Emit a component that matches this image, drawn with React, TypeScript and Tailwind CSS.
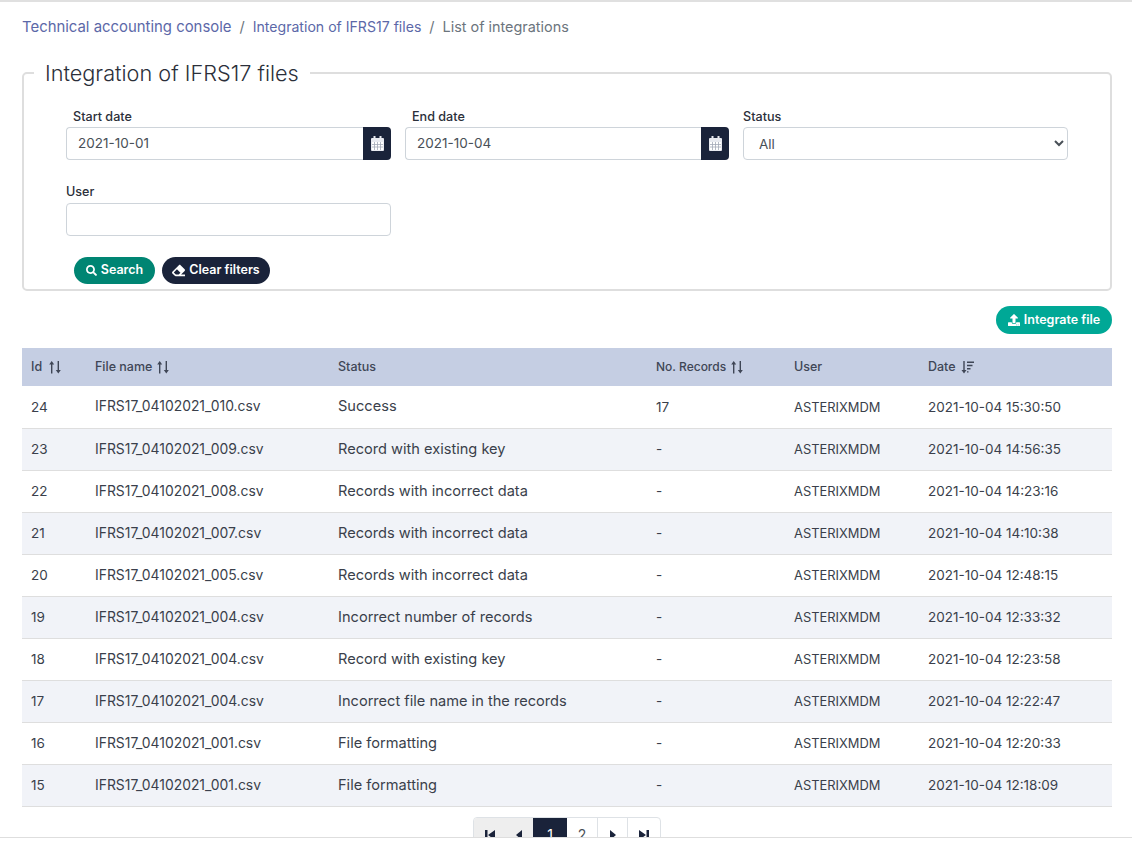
import { FaEraser, FaSearch, FaUpload } from "react-icons/fa";

const rows = [
  ["24", "IFRS17_04102021_010.csv", "Success", "17", "2021-10-04 15:30:50"],
  ["23", "IFRS17_04102021_009.csv", "Record with existing key", "-", "2021-10-04 14:56:35"],
  ["22", "IFRS17_04102021_008.csv", "Records with incorrect data", "-", "2021-10-04 14:23:16"],
  ["21", "IFRS17_04102021_007.csv", "Records with incorrect data", "-", "2021-10-04 14:10:38"],
  ["20", "IFRS17_04102021_005.csv", "Records with incorrect data", "-", "2021-10-04 12:48:15"],
  ["19", "IFRS17_04102021_004.csv", "Incorrect number of records", "-", "2021-10-04 12:33:32"],
  ["18", "IFRS17_04102021_004.csv", "Record with existing key", "-", "2021-10-04 12:23:58"],
  ["17", "IFRS17_04102021_004.csv", "Incorrect file name in the records", "-", "2021-10-04 12:22:47"],
  ["16", "IFRS17_04102021_001.csv", "File formatting", "-", "2021-10-04 12:20:33"],
  ["15", "IFRS17_04102021_001.csv", "File formatting", "-", "2021-10-04 12:18:09"],
];

function SortIcon() {
  return (
    <svg width="12" height="13" viewBox="0 0 12 13" className="text-[#3f4656]" fill="currentColor">
      <path d="M2.7 0 L5.2 3.5 H3.4 V12.5 H2 V3.5 H0.2 Z" />
      <path d="M9.3 12.5 L6.8 9 H8.6 V0 H10 V9 H11.8 Z" />
    </svg>
  );
}

function SortDownIcon() {
  return (
    <svg width="13" height="13" viewBox="0 0 13 13" className="text-[#3f4656]" fill="currentColor">
      <path d="M3 12.5 L0.5 9 H2.3 V0 H3.7 V9 H5.5 Z" />
      <path d="M6 0.5 H13 V1.9 H6 Z M6 3.8 H11.5 V5.2 H6 Z M6 7 H9.5 V8.4 H6 Z M6 10.2 H7.5 V11.6 H6 Z" />
    </svg>
  );
}

function CalendarIcon() {
  return (
    <svg width="13" height="15" viewBox="0 0 13 15">
      <rect x="0" y="2" width="13" height="13" rx="1" fill="#e8eaf0" />
      <rect x="2.5" y="0" width="2" height="4" fill="#e8eaf0" />
      <rect x="8.5" y="0" width="2" height="4" fill="#e8eaf0" />
      <rect x="1" y="6" width="11" height="8" fill="#ffffff" />
      <path d="M1 8.5H12 M1 11H12 M3.5 6V14 M6.5 6V14 M9.5 6V14" stroke="#a3a9b8" strokeWidth="0.8" />
    </svg>
  );
}

function DateField({ label, value }: { label: string; value: string }) {
  return (
    <div>
      <label className="block pl-[7px] text-[12.6px] leading-[18px] font-medium text-[#2b2f3a] mb-[1px]">{label}</label>
      <div className="flex h-[33px]">
        <input
          readOnly
          value={value}
          className="flex-1 min-w-0 border border-[#ced4da] border-r-0 rounded-l bg-white px-[11px] text-[13.5px] text-[#495057] outline-none"
        />
        <span className="w-[28px] bg-[#1a233a] rounded-r flex items-center justify-center">
          <CalendarIcon />
        </span>
      </div>
    </div>
  );
}

function PageButton({ children, className }: { children: React.ReactNode; className: string }) {
  return <span className={`h-[34px] flex items-center justify-center border-r border-[#dee2e6] text-[14px] ${className}`}>{children}</span>;
}

export default function App() {
  return (
    <div className="h-[843px] flex flex-col overflow-hidden bg-white text-[#3a3f4b] font-['Inter','Liberation_Sans',sans-serif]">
      <div className="h-[837px] border-t-2 border-[#e0e0e0] pl-[22px] pr-[20px] overflow-hidden">
        <nav className="flex items-center gap-[8px] pt-[15px] text-[14.5px] leading-[20px]">
          <span className="text-[#5c68a8] text-[14.9px]">Technical accounting console</span>
          <span className="text-[#6c757d]">/</span>
          <span className="text-[#5c68a8] text-[14.1px]">Integration of IFRS17 files</span>
          <span className="text-[#6c757d]">/</span>
          <span className="text-[#6c757d] text-[14.4px]">List of integrations</span>
        </nav>

        <fieldset className="mt-[21px] h-[233px] border-2 border-[#dedede] rounded-[5px] px-[42px] pb-[5px] flex flex-col">
          <legend className="ml-[-32px] px-[11px] text-[21.7px] leading-[30px] font-light text-[#2b2f3a]">Integration of IFRS17 files</legend>
          <div className="grid grid-cols-[325px_324px_325px] gap-x-[14px] mt-[20px]">
            <DateField label="Start date" value="2021-10-01" />
            <DateField label="End date" value="2021-10-04" />
            <div>
              <label className="block text-[12.6px] leading-[18px] font-medium text-[#2b2f3a] mb-[1px]">Status</label>
              <select className="w-full h-[33px] border border-[#ced4da] rounded bg-white pl-[11px] text-[13.5px] text-[#495057] outline-none">
                <option>All</option>
              </select>
            </div>
          </div>
          <div className="w-[325px] mt-[23px]">
            <label className="block text-[12.6px] leading-[18px] font-medium text-[#2b2f3a] mb-[2px]">User</label>
            <input readOnly className="w-full h-[33px] border border-[#ced4da] rounded bg-white outline-none" />
          </div>
          <div className="flex gap-[7px] mt-auto pl-[8px]">
            <button className="h-[27px] w-[81px] rounded-full bg-[#008573] text-white text-[12.5px] font-semibold flex items-center justify-center gap-[4px]">
              <FaSearch size={11} /> Search
            </button>
            <button className="h-[27px] w-[108px] rounded-full bg-[#1a233a] text-white text-[12.5px] font-semibold flex items-center justify-center gap-[4px]">
              <FaEraser size={13} /> Clear filters
            </button>
          </div>
        </fieldset>

        <div className="flex justify-end mt-[15px] mb-[14px]">
          <button className="h-[28px] w-[116px] rounded-full bg-[#00a896] text-white text-[12.5px] font-semibold flex items-center justify-center gap-[4px]">
            <FaUpload size={12} /> Integrate file
          </button>
        </div>

        <table className="w-[1090px] table-fixed border-collapse text-[13.5px]">
          <colgroup>
            <col className="w-[64px]" />
            <col className="w-[243px]" />
            <col className="w-[318px]" />
            <col className="w-[138px]" />
            <col className="w-[134px]" />
            <col className="w-[193px]" />
          </colgroup>
          <thead>
            <tr className="h-[38px] bg-[#c5cee3] text-[12.5px] font-medium text-[#3f4656]">
              <th className="pl-[9px] text-left font-medium"><span className="flex items-center gap-[7px]">Id <SortIcon /></span></th>
              <th className="pl-[9px] text-left font-medium"><span className="flex items-center gap-[5px]">File name <SortIcon /></span></th>
              <th className="pl-[9px] text-left font-medium">Status</th>
              <th className="pl-[9px] text-left font-medium text-[12px]"><span className="flex items-center gap-[5px]">No. Records <SortIcon /></span></th>
              <th className="pl-[9px] text-left font-medium">User</th>
              <th className="pl-[9px] text-left font-medium"><span className="flex items-center gap-[5px]">Date <SortDownIcon /></span></th>
            </tr>
          </thead>
          <tbody>
            {rows.map((row, i) => (
              <tr key={row[0]} className={`h-[42px] border-b border-[#dedede] ${i % 2 === 1 ? "bg-[#f1f3f8]" : "bg-white"}`}>
                <td className="pl-[9px]">{row[0]}</td>
                <td className="pl-[9px] text-[13.9px]">{row[1]}</td>
                <td className="pl-[9px] pt-[1px] text-[14.6px]">{row[2]}</td>
                <td className="pl-[9px]">{row[3]}</td>
                <td className="pl-[9px] pt-[1px] text-[12.9px]">ASTERIXMDM</td>
                <td className="pl-[9px]">{row[4]}</td>
              </tr>
            ))}
          </tbody>
        </table>

        <div className="flex justify-center mt-[10px]">
          <div className="flex border border-[#dee2e6] rounded-t overflow-hidden">
            <PageButton className="w-[31px] bg-[#eeeeee] border-r-0 text-[#1a233a]">
              <svg width="10" height="10" viewBox="0 0 10 10" fill="currentColor"><path d="M0 0H2.5V10H0Z M10 0V10L3 5Z" /></svg>
            </PageButton>
            <PageButton className="w-[28px] bg-[#eeeeee] border-r-0 text-[#1a233a]">
              <svg width="6" height="10" viewBox="0 0 6 10" fill="currentColor"><path d="M6 0V10L0 5Z" /></svg>
            </PageButton>
            <PageButton className="w-[34px] bg-[#1a233a] border-r-0 text-white">1</PageButton>
            <PageButton className="w-[31px] text-[#495057]">2</PageButton>
            <PageButton className="w-[30px] text-[#1a233a]">
              <svg width="6" height="10" viewBox="0 0 6 10" fill="currentColor"><path d="M0 0V10L6 5Z" /></svg>
            </PageButton>
            <PageButton className="w-[32px] border-r-0 text-[#1a233a]">
              <svg width="10" height="10" viewBox="0 0 10 10" fill="currentColor"><path d="M10 0H7.5V10H10Z M0 0V10L7 5Z" /></svg>
            </PageButton>
          </div>
        </div>
      </div>
      <div className="h-[6px] border-t border-[#dedede] bg-white" />
    </div>
  );
}
